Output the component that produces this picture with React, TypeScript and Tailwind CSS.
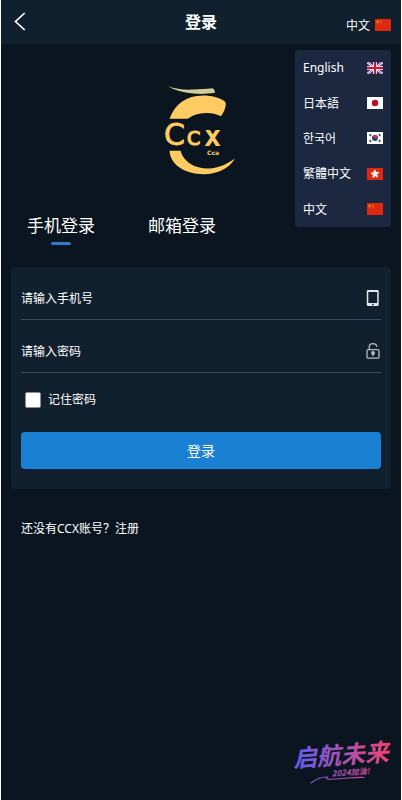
import { useState } from 'react';
import type { ReactNode } from 'react';

const languages = [
  { id: 'en', label: 'English' },
  { id: 'ja', label: '日本語' },
  { id: 'ko', label: '한국어' },
  { id: 'hk', label: '繁體中文' },
  { id: 'zh', label: '中文' },
];

const tabs = [
  { id: 'phone', label: '手机登录' },
  { id: 'email', label: '邮箱登录' },
];

function Flag({ id }: { id: string }) {
  return (
    <svg viewBox="0 0 16 12" className="h-3 w-4 shrink-0" aria-hidden="true">
      {id === 'en' && (
        <>
          <path fill="#1f3a80" d="M0 0h16v12H0z" />
          <path stroke="#fff" strokeWidth="2.2" d="M0 0l16 12M16 0L0 12" />
          <path stroke="#d0142c" strokeWidth="0.7" d="M0 0l16 12M16 0L0 12" />
          <path stroke="#fff" strokeWidth="3.6" d="M8 0v12M0 6h16" />
          <path stroke="#d0142c" strokeWidth="2" d="M8 0v12M0 6h16" />
        </>
      )}
      {id === 'ja' && (
        <>
          <path fill="#fff" d="M0 0h16v12H0z" />
          <circle cx="8" cy="6" r="3.2" fill="#bf0a2b" />
        </>
      )}
      {id === 'ko' && (
        <>
          <path fill="#fff" d="M0 0h16v12H0z" />
          <circle cx="8" cy="6" r="3" fill="#14478f" />
          <path fill="#cd2e3a" d="M5.3 4.7A3 3 0 0 1 11 6c-.8 1.3-2.2 1-3 0s-2.2-1-2.7-1.3z" />
          <path stroke="#444" strokeWidth="1.8" d="M2.7 3.9L4 2.3M12 9.7l1.3-1.6M2.7 8.1L4 9.7M12 2.3l1.3 1.6" />
        </>
      )}
      {id === 'hk' && (
        <>
          <path fill="#de2910" d="M0 0h16v12H0z" />
          {[0, 72, 144, 216, 288].map(angle => (
            <path key={angle} fill="#fff" transform={`rotate(${angle} 8 6)`} d="M8 6C6 5 6 2.5 8.4 1.6 8 2.6 10 3.6 8 6z" />
          ))}
        </>
      )}
      {id === 'zh' && (
        <>
          <path fill="#de2910" d="M0 0h16v12H0z" />
          <path fill="#ffb800" d="M2.6 1.3l.4 1.2h1.3l-1 .8.4 1.2-1.1-.7-1.1.7.4-1.2-1-.8h1.3z" />
          <g fill="#f08a00">
            <circle cx="5.5" cy="1.2" r="0.5" />
            <circle cx="6.5" cy="2.4" r="0.5" />
            <circle cx="6.5" cy="3.8" r="0.5" />
            <circle cx="5.5" cy="4.8" r="0.5" />
          </g>
        </>
      )}
    </svg>
  );
}

function Logo() {
  return (
    <svg viewBox="0 0 90 110" className="h-[110px] w-[90px]" role="img" aria-label="CCX">
      <path fill="#d1cd98" d="M11.5 11c8 3 16 4 25 3.6 8-.2 13-.6 20-1.3 1.5 1 2.5 2.2 2.5 4.5-8 1.2-15 1.4-22 .7-10-1-18-3-25.5-7.5z" />
      <path fill="#ffcb62" d="M13.500 43.700C19 29 31 20.500 47 20.600c9 0 16 2.300 20.500 4.800 1.800 1 2.400 2.300 2.300 4-.3 4-2 8-5 11.800-5-2-9-3.300-15-3.100-7 .2-13 2-18 5.600z" />
      <path fill="#ffcb62" d="M13.500 75.800h11C28 88 40 94 53 93.500c10-.5 18-4.500 26-10-6 10-17 15.600-31 15.700-19 0-33.500-9-34.500-23.400z" />
      <g fill="#ffcb62" stroke="#ffcb62" fontFamily="'DejaVu Sans', sans-serif">
        <text x="8" y="70" fontSize="30" strokeWidth="0.8">C</text>
        <text x="31" y="70" fontSize="19" strokeWidth="1.2">C</text>
        <text x="50" y="70" fontSize="19" strokeWidth="2">X</text>
        <text x="51" y="80" fontSize="6" stroke="none" fontWeight="700">Cca</text>
      </g>
    </svg>
  );
}

function PhoneIcon() {
  return (
    <svg viewBox="0 0 16 18" className="h-[18px] w-4 shrink-0" aria-hidden="true">
      <path fill="#e4e8ec" fillRule="evenodd" d="M3 1h9.5a1.200 1.200 0 0 1 1.200 1.200v13.600a1.200 1.200 0 0 1-1.200 1.200H3a1.200 1.200 0 0 1-1.200-1.200V2.200A1.200 1.200 0 0 1 3 1zM3.300 2.900v11.100h8.900V2.900zM7.800 14.700a.8.8 0 1 0 .01 0z" />
    </svg>
  );
}

function LockIcon() {
  return (
    <svg viewBox="0 0 16 18" className="h-[18px] w-4 shrink-0" fill="none" stroke="#b4bac1" strokeWidth="1.3" aria-hidden="true">
      <rect x="2" y="7.6" width="12" height="8.6" rx="1.3" />
      <path d="M4.2 7.6V5.4C4.2 3 5.8 1.6 8 1.6c2 0 3.6 1.2 3.9 3.2" />
      <circle cx="8" cy="11" r="1.3" fill="#b4bac1" />
      <path d="M8 11v3.2" />
    </svg>
  );
}

type FieldProps = {
  id: string;
  type: string;
  placeholder: string;
  icon: ReactNode;
};

function Field({ id, type, placeholder, icon }: FieldProps) {
  return (
    <div className="flex h-[53px] items-center border-b border-[#3c4b65] pt-[10px]">
      <input
        id={id}
        type={type}
        aria-label={placeholder}
        placeholder={placeholder}
        className="h-8 min-w-0 flex-1 bg-transparent text-xs text-white outline-none placeholder:text-white"
      />
      {icon}
    </div>
  );
}

function Slogan() {
  return (
    <svg viewBox="0 0 108 60" className="h-[60px] w-[108px] overflow-visible" role="img" aria-label="启航未来">
      <defs>
        <linearGradient id="slogan" gradientUnits="userSpaceOnUse" x1="10" y1="0" x2="106" y2="0">
          <stop offset="0" stopColor="#5b5df0" />
          <stop offset="0.5" stopColor="#a552b8" />
          <stop offset="1" stopColor="#f04477" />
        </linearGradient>
      </defs>
      <g fill="url(#slogan)" fontFamily="'Noto Sans CJK SC', sans-serif" fontStyle="italic" fontWeight="700">
        <text x="10" y="32" fontSize="24" transform="rotate(-4 56 28)">启航未来</text>
        <text x="49" y="44" fontSize="8" transform="rotate(-4 56 44)">2024加油!</text>
      </g>
      <path fill="none" stroke="url(#slogan)" strokeWidth="1.2" strokeLinecap="round" d="M28 51c5-4 10-6 16-6-3 3 6 2.500 15 1.500 8-.5 15-1.500 22-1" />
    </svg>
  );
}

export default function App() {
  const [tab, setTab] = useState('phone');
  const [language, setLanguage] = useState('zh');
  const [menuOpen, setMenuOpen] = useState(true);
  const current = languages.find(item => item.id === language)!;

  return (
    <div className="relative flex min-h-screen flex-col border-x border-white bg-[#0b1520] font-['Noto_Sans','Noto_Sans_CJK_SC','Noto_Sans_CJK_KR',sans-serif] text-xs text-white">
      <header className="grid h-11 grid-cols-3 items-center bg-[#10202f] px-[10px]">
        <button type="button" aria-label="返回" className="flex h-8 w-5 items-center">
          <svg viewBox="0 0 20 20" className="size-5" fill="none" stroke="#fff" strokeWidth="1.7" aria-hidden="true">
            <path d="M13.700 1L4.500 9.500l9.200 8.500" />
          </svg>
        </button>
        <h1 className="text-center text-base font-bold">登录</h1>
        <button
          type="button"
          aria-expanded={menuOpen}
          onClick={() => setMenuOpen(!menuOpen)}
          className="flex items-center gap-[5px] justify-self-end pt-[6px]"
        >
          <span className="pt-px">{current.label}</span>
          <Flag id={current.id} />
        </button>
      </header>

      {menuOpen && (
        <ul className="absolute top-[50px] right-[10px] grid h-[177px] w-24 grid-rows-5 rounded bg-[#1c2740]">
          {languages.map(item => (
            <li key={item.id} className="flex">
              <button
                type="button"
                onClick={() => setLanguage(item.id)}
                className="flex flex-1 items-center justify-between px-2"
              >
                <span className="pt-px">{item.label}</span>
                <Flag id={item.id} />
              </button>
            </li>
          ))}
        </ul>
      )}

      <main className="flex flex-1 flex-col px-[10px]">
        <div className="flex justify-center pt-[31px]">
          <Logo />
        </div>

        <div role="tablist" className="mt-7 flex gap-[53px] px-4">
          {tabs.map(item => (
            <button
              key={item.id}
              type="button"
              role="tab"
              aria-selected={tab === item.id}
              onClick={() => setTab(item.id)}
              className="flex flex-col items-center gap-[3px] text-[17px] leading-[26px]"
            >
              {item.label}
              <span className={tab === item.id ? 'h-[3px] w-5 rounded-full bg-[#2f7acb]' : 'h-[3px] w-5'} />
            </button>
          ))}
        </div>

        <form onSubmit={e => e.preventDefault()} className="mt-[22px] rounded bg-[#10202f] px-[10px] pb-5">
          {tab === 'phone' ? (
            <Field id="phone" type="tel" placeholder="请输入手机号" icon={<PhoneIcon />} />
          ) : (
            <Field id="email" type="email" placeholder="请输入邮箱" icon={<PhoneIcon />} />
          )}
          <Field id="password" type="password" placeholder="请输入密码" icon={<LockIcon />} />

          <label className="mt-[19px] flex items-center gap-[7px] pl-1 leading-4">
            <input
              type="checkbox"
              className="size-4 appearance-none rounded-xs border border-[#8a8f96] bg-white checked:bg-[#1a80d3]"
            />
            记住密码
          </label>

          <button type="submit" className="mt-6 h-[37px] w-full rounded bg-[#1a80d3] text-sm">
            登录
          </button>
        </form>

        <p className="mt-8 px-[10px] leading-4">
          还没有CCX账号？<a href="#register">注册</a>
        </p>

        <div className="mt-auto flex justify-end pt-10 pb-2">
          <Slogan />
        </div>
      </main>
    </div>
  );
}
